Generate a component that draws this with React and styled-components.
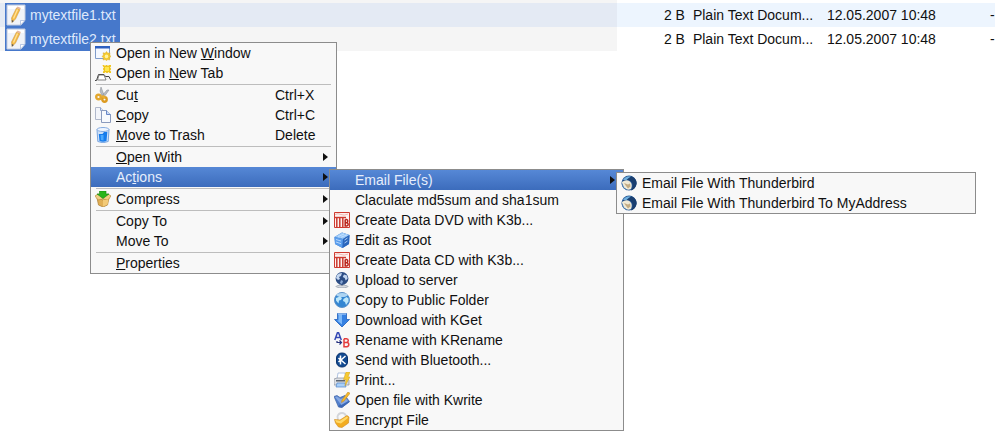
import React from "react";
import styled, { createGlobalStyle, css } from "styled-components";

const GlobalStyle = createGlobalStyle`
  * {
    box-sizing: border-box;
  }

  body {
    margin: 0;
    background: #ffffff;
    color: #101010;
    font-family: "Liberation Sans", Arial, sans-serif;
    font-size: 14px;
    overflow: hidden;
  }
`;

/* ---------- file list ---------- */

const Desktop = styled.main`
  position: relative;
  min-height: 100vh;
`;

const FileTable = styled.table`
  width: 100%;
  border-collapse: collapse;
  table-layout: fixed;
`;

const NameCol = styled.col`
  width: 62%;
`;

const SizeCol = styled.col`
  width: 72px;
`;

const TypeCol = styled.col`
  width: 134px;
`;

const DashCol = styled.col`
  width: 5px;
`;

const FileCell = styled.td`
  height: 24px;
  padding: 0 4px;
  line-height: 24px;
  white-space: nowrap;
  text-align: ${(props) => (props.$end ? "right" : "left")};
`;

const NameCell = styled(FileCell)`
  padding: 0 0 0 5px;
`;

const DashCell = styled(FileCell)`
  padding: 0;
`;

const FileRow = styled.tr`
  background: ${(props) => (props.$current ? "#edf5fe" : "#ffffff")};

  ${NameCell} {
    background: ${(props) => (props.$current ? "#e4eaf4" : "#f5f5f5")};
  }
`;

/* bottom edge of the row that is scrolled out of view */
const ClippedCell = styled.td`
  height: 3px;
  padding: 0 0 0 7px;
  line-height: 0;
  background: ${(props) => (props.$name ? "#f5f5f5" : "#ffffff")};
`;

const FileName = styled.span`
  display: inline-flex;
  align-items: center;
  gap: 4px;
  height: 24px;
  padding: 0 4px 0 1px;
  background: #4678cb;
  color: #dfe9fb;
  vertical-align: top;
`;

/* ---------- menus ---------- */

const MenuPanel = styled.ul`
  position: absolute;
  z-index: 1;
  margin: 0;
  padding: 0;
  list-style: none;
  border: 1px solid #8c8c8c;
  background: #f8f8f8;
`;

const ContextMenu = styled(MenuPanel)`
  top: 42px;
  left: 90px;
  width: 247px;
`;

const SubMenu = styled(MenuPanel)`
  top: 2px;
  left: 238px;
  width: 295px;
`;

const MailMenu = styled(MenuPanel)`
  top: 2px;
  left: 286px;
  width: 360px;
`;

const MenuEntry = styled.li`
  position: relative;
`;

const Separator = styled.li`
  height: 2px;
  margin: 0 5px;
  border-top: 1px solid #f8f8f8;
  border-bottom: 1px solid #bdbdbd;
`;

const MenuButton = styled.button`
  display: flex;
  align-items: center;
  gap: 5px;
  width: 100%;
  height: 20px;
  padding: 0 8px 0 4px;
  border: 0;
  background: transparent;
  color: #101010;
  font: inherit;
  line-height: 20px;
  text-align: left;
  white-space: nowrap;

  ${(props) =>
    props.$active &&
    css`
      background: linear-gradient(#5688d6, #3c6cbc);
      color: #e6eefc;
    `}
`;

const IconSlot = styled.span`
  display: flex;
  flex: none;
  width: 16px;
  height: 16px;
`;

const Label = styled.span`
  flex: 1;
`;

const Shortcut = styled.kbd`
  width: 53px;
  font: inherit;
`;

const Arrow = styled.span`
  border: solid transparent;
  border-width: 4px 0 4px 5px;
  border-left-color: #101010;
`;

/* ---------- icons ---------- */

const Icon = ({ children }) => (
  <svg width="16" height="16" viewBox="0 0 16 16" aria-hidden="true">
    {children}
  </svg>
);

const TextFileIcon = () => (
  <svg width="20" height="22" viewBox="0 0 20 22" aria-hidden="true">
    <path d="M1 1h18v15l-4 5H1z" fill="#f1f3f8" stroke="#c4cde0" />
    <path d="M2 2h16v3H2z" fill="#fff" />
    <path d="M14.500 21v-4.500H19z" fill="#fff" stroke="#9fb3d8" strokeWidth=".7" />
    <path d="M10.500 4l3.500 1.500L9.500 15 6 18.500 5.500 14z" fill="#f5b942" stroke="#c99a4a" strokeWidth=".6" />
    <path d="M11.500 5.500L7.500 14.500" stroke="#ffe29a" strokeWidth="1.300" />
    <path d="M10.500 4l1-1.500 3.500 1.500-1 1.500z" fill="#e9b79b" />
    <path d="M5.800 16l.2 2.500 1.800-1.500z" fill="#555" />
  </svg>
);

const NewWindowIcon = () => (
  <Icon>
    <path d="M.5 1.500h14v12H.5z" fill="#f4f8ff" stroke="#7f9ccb" />
    <path d="M0 1h15v2.500H0z" fill="#2c5fc0" />
    <path d="M11.500 6.500l1.300 1.800 2.200-.5-.3 2.200 1.300 1.500-1.500 1.300.3 2.200-2.100-.5-1.200 1.300-1.300-1.300-2.200.5.500-2.200L7 11.500 8.500 10l-.5-2.200 2.200.5z" fill="#f5c92c" stroke="#d9ac35" strokeWidth=".5" />
    <circle cx="11.500" cy="11.400" r="1.800" fill="#fff3a0" />
  </Icon>
);

const NewTabIcon = () => (
  <Icon>
    <path d="M0 15.500h1.500l2-6h5.500l1.500 2H14l1.500 3H16" fill="#eee" stroke="#444" />
    <path d="M4 10h5l2 5H2.500z" fill="#fff" stroke="#666" strokeWidth=".8" />
    <path d="M7.500 0h1.500l1 1 1-1h1l1 1 1-1h2v1.500l-1 1 1 1v1l-1 1 1 1V8h-1.500l-1-1-1 1h-1l-1-1-1 1h-1.500V6.500l1-1-1-1v-1l1-1-1-1z" fill="#f0c51d" />
    <path d="M10 2h4v4h-4z" fill="#ffe84e" />
  </Icon>
);

const CutIcon = () => (
  <Icon>
    <path d="M6 0l3 8-2 1-2-5zM14 3l-5 7-1.500-2L12 3z" fill="#b9bdc3" stroke="#858b92" strokeWidth=".5" />
    <circle cx="3.500" cy="10" r="2.300" fill="none" stroke="#e3a72e" strokeWidth="2.400" />
    <circle cx="9.500" cy="12.500" r="2.200" fill="none" stroke="#dc9a20" strokeWidth="2.400" />
    <path d="M6 9l3-1 1.500 3-2 1z" fill="#e9ae31" />
  </Icon>
);

const CopyIcon = () => (
  <Icon>
    <path d="M.5.500h5l3 3v9h-8z" fill="#f3f5fa" stroke="#b0b8cb" />
    <path d="M5.500.500v3h3" fill="#dce6f8" stroke="#8da3cf" />
    <path d="M6.500 3.500h5l4 4v8h-9z" fill="#f7f9fd" stroke="#8a9abd" />
    <path d="M11.500 3.500v4h4" fill="#c9d9f6" stroke="#6686c7" />
  </Icon>
);

const TrashIcon = () => (
  <Icon>
    <path d="M2 2.500l.8 12q5.200 2.500 10.400 0l.8-12z" fill="#cfe1f8" stroke="#7ba7e0" />
    <ellipse cx="8" cy="2.500" rx="6" ry="2" fill="#eef5ff" stroke="#85abe0" />
    <path d="M3.800 7l.7 7q3.500 1.500 7 0L12.300 5 9 5 7.500 7z" fill="#167cec" />
    <path d="M5.500 8h3v5.500l-2.500-.5z" fill="#4aa9ff" />
  </Icon>
);

const CompressIcon = () => (
  <Icon>
    <path d="M2 7l6 2 6-2-1.500 7L8 16l-4.500-2z" fill="#e1af55" stroke="#ab7b30" strokeWidth=".7" />
    <path d="M0 5l3-2 5 2 5-2 3 2-3 4-5-1-5 1z" fill="#f0cf85" stroke="#b98b3d" strokeWidth=".7" />
    <path d="M8 9v6.500l4.500-2 1-5z" fill="#f3ca77" />
    <path d="M4.500 0h6.500v3h3L8 7.500 2 3h2.500z" fill="#29b51c" stroke="#168610" strokeWidth=".6" />
  </Icon>
);

const K3bIcon = () => (
  <Icon>
    <path d="M.5.500h15v15H.5z" fill="#fdf1ef" stroke="#cf3b30" />
    <path d="M1 2.500q3-1.500 6 0t7-.5" fill="none" stroke="#f0b7b0" />
    <path d="M1 5.500h11" stroke="#cc3a2f" strokeWidth="1.400" />
    <path d="M2.800 6v9.500M5.800 6v9.500M8.800 6v9.500" stroke="#cc3a2f" strokeWidth="1.500" />
    <path d="M11.200 7.500v6.500h1.500q1.500-.2 1.500-1.700t-1.500-1.600h-1.500M11.200 7.500h1.300q1.300.2 1.300 1.500t-1.100 1.600" fill="none" stroke="#b8251b" strokeWidth="1.500" />
  </Icon>
);

const CubeIcon = () => (
  <Icon>
    <path d="M.5 5L8 .5 15.500 3l-.5 9-6.500 4L1 12z" fill="#2f6cc4" />
    <path d="M.5 5L8 .5 15.500 3 9 7z" fill="#9ac8f7" />
    <path d="M.5 5L9 7l-.5 9L1 12z" fill="#5a9dec" />
    <path d="M15.500 3L9 7l-.5 9 6.500-4z" fill="#2a66bd" />
    <path d="M2 7.500l5 1.500M2 10l5 1.700M4 4.500l6-2.500M7 5.300l6-2.500M10.500 8l3-2M10.500 11l3-2" stroke="#cce5ff" strokeWidth=".8" />
  </Icon>
);

const UploadIcon = () => (
  <Icon>
    <ellipse cx="8" cy="14.500" rx="6" ry="1.300" fill="#d5d9df" stroke="#8790a0" strokeWidth=".6" />
    <path d="M7 12h2v2H7z" fill="#919baa" />
    <circle cx="8" cy="6.500" r="6.400" fill="#2c4d85" />
    <path d="M3 3q2-2 5-2l-1 3-2 1 1 2-2 1-2-2zM10 2.500l3 1 .7 3-2 2-1-2.500-2-1z" fill="#c4d7f0" />
    <path d="M7 8l2 1-1 3-2-1z" fill="#89a8d5" />
  </Icon>
);

const GlobeIcon = () => (
  <Icon>
    <circle cx="8" cy="8" r="7.500" fill="#3486d2" stroke="#5b91c9" />
    <path d="M2 6l4-1.500 2 1.500-1 2-2 .5-.5 3L2 8.500zM9.500 7l3-2 2 1.500v3L12 13l-1-3-2-1z" fill="#bce6fa" />
    <ellipse cx="8" cy="3" rx="5.500" ry="2" fill="#d5edfc" opacity=".75" />
  </Icon>
);

const DownloadIcon = () => (
  <Icon>
    <path d="M3.500 1.500h9v6h3L8 15 .5 7.500h3z" fill="#3580e2" stroke="#1e5fbd" strokeWidth=".8" />
    <path d="M4.500 2.500H8v10L3 8.500h1.500z" fill="#7cb8f8" />
    <path d="M4 2h8" stroke="#c0dcfb" />
  </Icon>
);

const RenameIcon = () => (
  <Icon>
    <path d="M.8 8L3.500.500h1L7.300 8M2 5.500h4" fill="none" stroke="#3348b4" strokeWidth="1.500" />
    <path d="M3 9v1.500h4M5.500 8.500l2 2-2 2" fill="none" stroke="#27337f" strokeWidth="1.200" />
    <path d="M10 6.700v8h2.800q2-.2 2-2.200t-2-2H10M10 6.700h2.500q1.800.2 1.800 1.900t-1.800 1.900" fill="none" stroke="#e43b3b" strokeWidth="1.500" />
  </Icon>
);

const BluetoothIcon = () => (
  <Icon>
    <rect x="2.500" y="1" width="11" height="14" rx="5" fill="#124a91" stroke="#0a326c" />
    <path d="M6.500 3.500v9M11.500 4L7 8l4.500 4M4.500 6l2 2-2 2" fill="none" stroke="#fff" strokeWidth="1.500" />
  </Icon>
);

const PrintIcon = () => (
  <Icon>
    <path d="M4 1h7l1 6H3z" fill="#fff" stroke="#8fabd6" strokeWidth=".7" />
    <path d="M0 7l3-1h10l2 2v5H0z" fill="#dcdfe4" stroke="#878d98" strokeWidth=".7" />
    <path d="M2 8h9v1.500H2z" fill="#5c6571" />
    <path d="M3 11h8l1 4H2z" fill="#a8d0fa" stroke="#5285c9" strokeWidth=".7" />
    <path d="M12 0h4l-2 5h2l-5 9 1-6.500H9.500z" fill="#f7ca31" stroke="#cfa02c" strokeWidth=".5" />
  </Icon>
);

const KwriteIcon = () => (
  <Icon>
    <path d="M0 4.500l3-1 3 2 5-2 4.500 6L8 15.500 4.500 15z" fill="#5380cd" stroke="#3f64a8" strokeWidth=".7" />
    <path d="M1 5l2-.5L6.500 7 11 5l3 4-6.500 4z" fill="#86a8e2" />
    <path d="M4.500 15l1-2.500 2 .5 7.500-4 .5 1L8 15.500z" fill="#3d68b5" />
    <path d="M14 0l2 1.300L10 9l-2.500 1.500L8 8z" fill="#f4b829" stroke="#c08a2a" strokeWidth=".6" />
  </Icon>
);

const LockIcon = () => (
  <Icon>
    <path d="M4 8L3.500 4.500Q4.500 1 8 1q3 0 4 3l.5 4" fill="none" stroke="#d3d5d9" strokeWidth="1.800" />
    <path d="M.5 7.500L6 8l7-4.500 2 1.500-.5 6L8 15.500 4.500 15 1.500 11z" fill="#f2ac20" stroke="#d08a1c" strokeWidth=".6" />
    <path d="M1 8l5 .7L12.800 4.500l1.400 1.200L7 11.500 2.500 10.500z" fill="#ffd968" />
  </Icon>
);

const ThunderbirdIcon = () => (
  <Icon>
    <circle cx="8" cy="8" r="7.500" fill="#2a5a96" />
    <path d="M3 4q4-4 9-2 4.500 3 3.500 7.500-1.500 5-5.500 6 3-5 .5-8.500T2 6z" fill="#1a3f70" />
    <path d="M1 7q4-3 8-.5 3 3 1 7.500-3.500 1.500-6-.5Q1 11 1 7z" fill="#efe9d6" />
    <path d="M3 8l4 1.500 2-1 .5 3-2.500 2-2-2.500z" fill="#c3ac84" />
    <path d="M2 5q3-4.500 8-3.500Q7 3 5.500 5z" fill="#6fb0df" />
    <path d="M1 8.500q.5 5 5 6.500" fill="none" stroke="#4c7fb5" />
  </Icon>
);

/* ---------- data ---------- */

const files = [
  { name: "mytextfile1.txt", current: true },
  { name: "mytextfile2.txt", current: false },
];

const actionItems = [
  { label: "Claculate md5sum and sha1sum" },
  { label: "Create Data DVD with K3b...", icon: <K3bIcon /> },
  { label: "Edit as Root", icon: <CubeIcon /> },
  { label: "Create Data CD with K3b...", icon: <K3bIcon /> },
  { label: "Upload to server", icon: <UploadIcon /> },
  { label: "Copy to Public Folder", icon: <GlobeIcon /> },
  { label: "Download with KGet", icon: <DownloadIcon /> },
  { label: "Rename with KRename", icon: <RenameIcon /> },
  { label: "Send with Bluetooth...", icon: <BluetoothIcon /> },
  { label: "Print...", icon: <PrintIcon /> },
  { label: "Open file with Kwrite", icon: <KwriteIcon /> },
  { label: "Encrypt File", icon: <LockIcon /> },
];

const MenuItem = ({ icon, label, shortcut, arrow, active, children }) => (
  <MenuEntry role="none">
    <MenuButton type="button" role="menuitem" $active={active}>
      <IconSlot>{icon}</IconSlot>
      <Label>{label}</Label>
      {shortcut && <Shortcut>{shortcut}</Shortcut>}
      {arrow && <Arrow />}
    </MenuButton>
    {children}
  </MenuEntry>
);

const FileList = () => (
  <FileTable>
    <colgroup>
      <NameCol />
      <SizeCol />
      <TypeCol />
      <col />
      <DashCol />
    </colgroup>
    <tbody>
      <tr>
        <ClippedCell $name />
        <ClippedCell colSpan={4} />
      </tr>
      {files.map((file) => (
        <FileRow key={file.name} $current={file.current}>
          <NameCell>
            <FileName>
              <TextFileIcon />
              {file.name}
            </FileName>
          </NameCell>
          <FileCell $end>2 B</FileCell>
          <FileCell>Plain Text Docum...</FileCell>
          <FileCell>12.05.2007 10:48</FileCell>
          <DashCell>-</DashCell>
        </FileRow>
      ))}
    </tbody>
  </FileTable>
);

const App = () => (
  <>
    <GlobalStyle />
    <Desktop>
      <FileList />
      <ContextMenu role="menu">
        <MenuItem icon={<NewWindowIcon />} label={<>Open in New <u>W</u>indow</>} />
        <MenuItem icon={<NewTabIcon />} label={<>Open in <u>N</u>ew Tab</>} />
        <Separator role="separator" />
        <MenuItem icon={<CutIcon />} label={<>Cu<u>t</u></>} shortcut="Ctrl+X" />
        <MenuItem icon={<CopyIcon />} label={<><u>C</u>opy</>} shortcut="Ctrl+C" />
        <MenuItem icon={<TrashIcon />} label={<><u>M</u>ove to Trash</>} shortcut="Delete" />
        <Separator role="separator" />
        <MenuItem label={<><u>O</u>pen With</>} arrow />
        <MenuItem label={<>Ac<u>t</u>ions</>} arrow active>
          <SubMenu role="menu">
            <MenuItem label="Email File(s)" arrow active>
              <MailMenu role="menu">
                <MenuItem icon={<ThunderbirdIcon />} label="Email File With Thunderbird" />
                <MenuItem
                  icon={<ThunderbirdIcon />}
                  label="Email File With Thunderbird To MyAddress"
                />
              </MailMenu>
            </MenuItem>
            {actionItems.map((item) => (
              <MenuItem key={item.label} icon={item.icon} label={item.label} />
            ))}
          </SubMenu>
        </MenuItem>
        <Separator role="separator" />
        <MenuItem icon={<CompressIcon />} label="Compress" arrow />
        <Separator role="separator" />
        <MenuItem label="Copy To" arrow />
        <MenuItem label="Move To" arrow />
        <Separator role="separator" />
        <MenuItem label={<><u>P</u>roperties</>} />
      </ContextMenu>
    </Desktop>
  </>
);

export default App;
